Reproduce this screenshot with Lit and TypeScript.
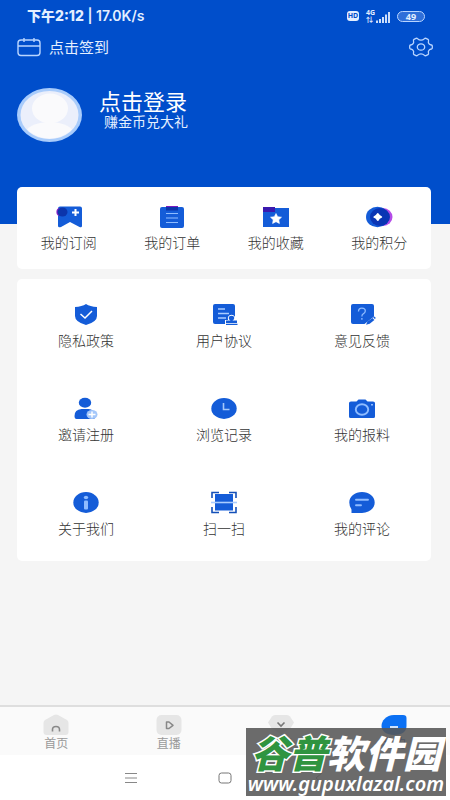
import { LitElement, html, css, svg } from "lit";
import { customElement, property } from "lit/decorators.js";

const icons: Record<string, unknown> = {
  subscribe: svg`<path d="M5 1.500h20q2 0 2 2v17.300q0 2.200-2.500 1.200L15 17l-9 5q-3 1-3-1.200V3.500q0-2 2-2z" fill="#145cd8"/>
    <ellipse cx="5" cy="7" rx="3.600" ry="4" fill="#8a20c8"/><ellipse cx="7.500" cy="7" rx="5" ry="4.500" fill="#0c35ab"/>
    <path d="M20.500 4v7M17 7.500h7" stroke="#fff" stroke-width="2"/>`,
  order: svg`<rect x="2" y="2" width="24" height="21" rx="2" fill="#145cd8"/>
    <path d="M8 1h12v3H8z" fill="#7a1cc0"/><path d="M8 2h12v3.500H8z" fill="#0c35ab"/>
    <path d="M8 8.500h12M8 13h12M8 17.500h12" stroke="#8fbcff" stroke-width="1.200"/>`,
  favorite: svg`<path d="M1 3h26v19H1z" fill="#145cd8"/><path d="M1 2h12v5H1z" fill="#3a19ae"/>
    <path d="M14 8.500l1.700 3.200 3.800.5-2.700 2.600.6 3.700-3.400-1.800-3.400 1.800.6-3.700-2.700-2.600 3.800-.5z" fill="#fff" stroke="#fff" stroke-width=".6" stroke-linejoin="round"/>`,
  points: svg`<ellipse cx="18" cy="12" rx="9.500" ry="9" fill="#b44be8"/><ellipse cx="12.500" cy="12" rx="11.500" ry="10.200" fill="#145cd8"/>
    <ellipse cx="15" cy="12" rx="10" ry="9" fill="#0a35b4"/><path d="M12.800 9q1 2 3.500 3-2.500 1-3.500 3-1-2-3.500-3 2.500-1 3.500-3z" fill="#fff" stroke="#fff" stroke-width="1.800" stroke-linejoin="round"/>`,
  shield: svg`<path d="M14 1q4 2.500 11 3v9q0 6-11 9Q3 19 3 13V4q7-.5 11-3z" fill="#145cd8"/>
    <path d="M8.500 11l4.500 4 7-7" fill="none" stroke="#fff" stroke-width="1.500"/>`,
  agreement: svg`<rect x="3" y="1" width="22" height="20" rx="2" fill="#145cd8"/>
    <path d="M8 6h7M8 10.500h11M8 15h8" stroke="#a9ccff" stroke-width="1.400"/>
    <path d="M15 22.500v-5.500h3q-1-5 3.500-5.300 4.500.3 3.500 5.300h3v5.500z" fill="#fff"/>
    <ellipse cx="21.500" cy="15" rx="2.700" ry="2.300" fill="#145cd8"/><path d="M20.300 16h2.400v1.600H27V20H16v-2.400h4.300zM16 20.800h11.500v1.200H16z" fill="#145cd8"/>`,
  feedback: svg`<path d="M5 1h19q2 0 2 2v10.500L16.500 21H5q-2 0-2-2V3q0-2 2-2z" fill="#145cd8"/>
    <path d="M10.500 8.500q0-3.300 3.400-3.300 3.400 0 3.400 2.900 0 1.700-2 2.700-1.400.8-1.400 2.700M13.900 15v1.700" fill="none" stroke="#8fbcff" stroke-width="1.300"/>
    <path d="M18 21.800l1.500-3.300 5-3.500 1.900 2-4.700 3.800z" fill="#145cd8"/><path d="M25.200 14.400l1.100-.9 1.600 1.600-1.100.9z" fill="#145cd8"/>`,
  invite: svg`<ellipse cx="13" cy="5.700" rx="6.200" ry="5" fill="#145cd8"/>
    <path d="M2.500 19q0-6.500 7-7h7q5.500.5 6 5v5H4.500q-2 0-2-3z" fill="#145cd8"/>
    <ellipse cx="20" cy="17.500" rx="5.500" ry="4.600" fill="#a4c7fa"/><path d="M20 14.500v6M16.500 17.500h7" stroke="#fff" stroke-width="1.500"/>`,
  history: svg`<ellipse cx="14" cy="11.500" rx="12.700" ry="10.400" fill="#145cd8"/><path d="M13.500 6v6.500h6" fill="none" stroke="#a4c7fa" stroke-width="1.600"/>`,
  camera: svg`<path d="M3 4.500h5.500l2-2h7l2 2H25q2 0 2 1.500v13.500q0 1.500-1.500 1.500h-23Q1 21 1 19.500V6q0-1.500 2-1.500z" fill="#145cd8"/>
    <ellipse cx="14" cy="12.500" rx="6.200" ry="5.300" fill="none" stroke="#8fbcff" stroke-width="1.900"/><path d="M23 7h2v1.500h-2z" fill="#8fbcff"/>`,
  about: svg`<ellipse cx="14" cy="11.500" rx="12.700" ry="10.400" fill="#145cd8"/><ellipse cx="14" cy="6.500" rx="2.200" ry="1.700" fill="#8fbcff"/><rect x="12" y="9.500" width="4" height="9" rx="1" fill="#8fbcff"/>`,
  scan: svg`<path d="M5 3h18v16.500H5z" fill="#145cd8"/><path d="M2 7V1.500h7M19 1.500h7V7M26 16v5.500h-7M9 21.500H2V16" fill="none" stroke="#1450b8" stroke-width="1.600"/>
    <path d="M1 11.500h26" stroke="#a9ccff" stroke-width="1.600"/>`,
  comment: svg`<path d="M14 1.100c7 0 12.700 4.400 12.700 10.400S21 21.900 14 21.900H3.500V18.500Q1.300 15.500 1.300 11.500C1.300 5.500 7 1.100 14 1.100z" fill="#145cd8"/>
    <path d="M8 8.700h12M8 14.200h5" stroke="#8fbcff" stroke-width="1.900" stroke-linecap="round"/>`,
};

@customElement("menu-item")
class MenuItem extends LitElement {
  @property() icon = "";
  @property() label = "";
  static styles = css`
    :host { display: block; }
    button {
      width: 100%; border: 0; padding: 0; background: none; font: inherit; color: #333;
      display: flex; flex-direction: column; align-items: center; gap: 4px; cursor: pointer;
    }
    svg { width: 28px; height: 24px; display: block; }
    span { font-size: 14px; line-height: 20px; font-weight: 300; }
  `;
  render() {
    return html`<button type="button"><svg viewBox="0 0 28 24" aria-hidden="true">${icons[this.icon]}</svg><span>${this.label}</span></button>`;
  }
}

@customElement("app-root")
class AppRoot extends LitElement {
  static styles = css`
    :host {
      display: flex; flex-direction: column; min-height: 100vh; position: relative;
      background: #f5f5f5; font-family: "Noto Sans", "Noto Sans CJK SC", sans-serif; color: #333;
    }
    button { border: 0; padding: 0; background: none; font: inherit; color: inherit; cursor: pointer; }
    svg { display: block; flex: none; }
    header { background: #004ecb; color: #e4efff; padding: 6px 17px 82px; }
    .status { display: flex; align-items: center; justify-content: space-between; height: 20px; padding: 0 8px 0 10px; }
    .clock { font: 600 14px/20px Inter, "Noto Sans CJK SC", sans-serif; }
    .clock b { font-weight: 800; }
    .signals { display: flex; align-items: center; gap: 7px; }
    .hd { background: #e4efff; color: #004ecb; border-radius: 3px; font-size: 7px; line-height: 10px; font-weight: 700; width: 12px; text-align: center; }
    .cell { display: flex; align-items: flex-end; }
    .gen { font-size: 7px; line-height: 7px; font-weight: 700; display: flex; flex-direction: column; width: 10px; }
    .battery { border: 1px solid #b8d4ff; border-radius: 6px; width: 26px; font-size: 9px; line-height: 9px; font-weight: 700; text-align: center; background: #2f6fd9; }
    .tools { display: flex; align-items: center; justify-content: space-between; height: 42px; }
    .sign { display: flex; align-items: center; gap: 8px; font-size: 15px; line-height: 22px; }
    .profile { display: flex; align-items: flex-start; gap: 17px; width: 100%; text-align: left; margin-top: 20px; }
    .who { display: flex; flex-direction: column; }
    .name { font-size: 22px; line-height: 26px; color: #fff; }
    .gift { font-size: 14px; line-height: 16px; padding-left: 5px; }
    main { flex: 1; display: flex; flex-direction: column; gap: 10px; padding: 0 19px 24px 17px; margin-top: -37px; }
    .card { background: #fff; border-radius: 5px; display: grid; }
    .quick { grid-template-columns: repeat(4, 1fr); padding: 18px 0 16px; }
    .services { grid-template-columns: repeat(3, 1fr); row-gap: 46px; padding: 24px 0 22px; }
    .tabs { display: grid; grid-template-columns: repeat(4, 1fr); border-top: 2px solid #dedede; background: #fafafa; height: 48px; }
    .tabs button { display: flex; flex-direction: column; align-items: center; padding-top: 7px; font-size: 12px; line-height: 16px; color: #999; }
    .tabs .active { color: #004ecb; }
    .system { background: #fff; height: 45px; display: flex; justify-content: space-between; align-items: center; padding: 0 124px; }
    .mark {
      position: absolute; right: 4px; bottom: 4px; width: 200px; height: 68px; background: rgba(86, 86, 86, 0.88);
      color: #fff; display: flex; flex-direction: column; align-items: center; white-space: nowrap;
    }
    .brand { font: italic 900 38px/44px "Noto Sans CJK SC", sans-serif; margin-top: 2px; }
    .brand em { color: #2f9440; -webkit-text-stroke: 3px #fff; paint-order: stroke fill; }
    .site { font: italic 600 20px/20px "Noto Sans", sans-serif; }
  `;

  quick = [["subscribe", "我的订阅"], ["order", "我的订单"], ["favorite", "我的收藏"], ["points", "我的积分"]];
  services = [
    ["shield", "隐私政策"], ["agreement", "用户协议"], ["feedback", "意见反馈"],
    ["invite", "邀请注册"], ["history", "浏览记录"], ["camera", "我的报料"],
    ["about", "关于我们"], ["scan", "扫一扫"], ["comment", "我的评论"],
  ];
  tabs = [
    { label: "首页", art: svg`<path d="M11 1q2-1 4 0l9 5q1.500 1 1.500 3v9q0 3-3 3h-19q-3 0-3-3V9q0-2 1.500-3z" fill="#e6e6e6"/><path d="M9.500 17.500v-2q0-3 3.500-3t3.500 3v2" fill="none" stroke="#888" stroke-width="1.600"/>` },
    { label: "直播", art: svg`<rect x=".5" y="1" width="25" height="20" rx="5" fill="#e6e6e6"/><path d="M10.500 8v6.500h2.500l4-3.200L13 8z" fill="none" stroke="#888" stroke-width="1.500" stroke-linejoin="round"/>` },
    { label: "服务", art: svg`<path d="M7 1h12q2 0 3 1.500l4 6-3 5-10 7-10-7-3-5 4-6Q5 1 7 1z" fill="#e6e6e6"/><path d="M9.500 8.500l3.500 3.500 3.500-3.500" fill="none" stroke="#777" stroke-width="1.600"/>` },
    { label: "我的", art: svg`<path d="M13 1h9q3.500 0 3.500 3v8c0 6-5 9-12.500 9S.5 17 .5 12 5 1 13 1z" fill="#0b70f3"/><path d="M9 13h8" stroke="#fff" stroke-width="1.600"/>` },
  ];

  render() {
    return html`
      <header>
        <div class="status">
          <span class="clock"><b>下午2:12</b> | 17.0K/s</span>
          <div class="signals">
            <span class="hd">HD</span>
            <span class="cell">
              <span class="gen"><span>4G</span><span>⇅</span></span>
              <svg width="14" height="12" viewBox="0 0 14 12" aria-hidden="true"><path d="M1 12V9.500M4 12V8M7 12V6M10 12V3.500M13 12V1" stroke="#e4efff" stroke-width="1.800"/></svg>
            </span>
            <span class="battery">49</span>
          </div>
        </div>
        <div class="tools">
          <button class="sign" type="button">
            <svg width="24" height="20" viewBox="0 0 24 20" fill="none" stroke="#b9d5ff" stroke-width="1.400" aria-hidden="true"><rect x="1" y="3" width="22" height="15.500" rx="3"/><path d="M1 9h22M7 1v4M17 1v4"/></svg>
            点击签到
          </button>
          <button type="button" aria-label="设置">
            <svg width="24" height="20" viewBox="0 0 24 20" fill="none" stroke="#b9d5ff" stroke-width="1.300" stroke-linejoin="round" aria-hidden="true"><path d="M7 1.300q1-.3 1.800.6 1.200 1.300 3.200 1.300t3.200-1.300q.8-.9 1.800-.6l2 1q.8.500.5 1.500-.6 2 .7 3.200.8.800 2.200 1 .9.200.9 1v2q0 .8-.9 1-1.400.2-2.200 1-1.300 1.200-.7 3.200.3 1-.5 1.500l-2 1q-1 .3-1.800-.6-1.200-1.300-3.200-1.300t-3.200 1.300q-.8.900-1.800.6l-2-1q-.8-.5-.5-1.500.6-2-.7-3.200-.8-.8-2.200-1-.9-.2-.9-1V9q0-.8.900-1 1.400-.2 2.200-1 1.300-1.200.7-3.200-.3-1 .5-1.500z"/><ellipse cx="12" cy="10" rx="3.700" ry="3.200"/></svg>
          </button>
        </div>
        <button class="profile" type="button">
          <svg width="65" height="54" viewBox="0 0 65 54" aria-hidden="true">
            <defs><clipPath id="face"><ellipse cx="32.500" cy="27" rx="28.500" ry="23.500"/></clipPath></defs>
            <ellipse cx="32.500" cy="27" rx="32.500" ry="27" fill="#a9ccfb"/><ellipse cx="32.500" cy="27" rx="29" ry="24" fill="#ebeffb"/>
            <g clip-path="url(#face)" fill="#fafafc"><ellipse cx="33" cy="20.500" rx="18" ry="15"/><ellipse cx="32.500" cy="47" rx="25" ry="13"/></g>
          </svg>
          <span class="who"><span class="name">点击登录</span><span class="gift">赚金币兑大礼</span></span>
        </button>
      </header>
      <main>
        <section class="card quick">${this.quick.map(([i, l]) => html`<menu-item icon=${i} label=${l}></menu-item>`)}</section>
        <section class="card services">${this.services.map(([i, l]) => html`<menu-item icon=${i} label=${l}></menu-item>`)}</section>
      </main>
      <nav class="tabs">
        ${this.tabs.map((t, n) => html`<button type="button" class=${n === 3 ? "active" : ""}><svg width="26" height="22" viewBox="0 0 26 22" aria-hidden="true">${t.art}</svg>${t.label}</button>`)}
      </nav>
      <div class="system">
        <button type="button" aria-label="菜单"><svg width="14" height="12" viewBox="0 0 14 12" stroke="#888"><path d="M1 1.500h12M1 6h12M1 10.500h12"/></svg></button>
        <button type="button" aria-label="主页"><svg width="14" height="12" viewBox="0 0 14 12" fill="none" stroke="#777"><rect x="1" y="1" width="12" height="10" rx="2.500"/></svg></button>
        <button type="button" aria-label="返回"><svg width="14" height="12" viewBox="0 0 14 12" fill="none" stroke="#888"><path d="M10 1L4 6l6 5"/></svg></button>
      </div>
      <div class="mark"><span class="brand"><em>谷普</em>软件园</span><span class="site">www.gupuxlazal.com</span></div>
    `;
  }
}
